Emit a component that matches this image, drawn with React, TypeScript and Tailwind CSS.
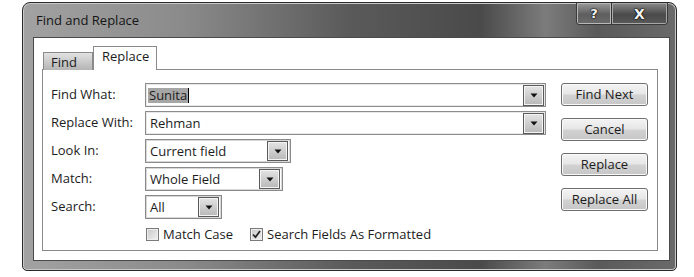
import React from "react";

const font = "font-['Open_Sans',sans-serif]";

function DropBtn({ className = "" }: { className?: string }) {
  return (
    <div
      className={`flex items-center justify-center border border-[#5a5a5a] bg-[linear-gradient(#e4e4e4,#b8b8b8)] shadow-[inset_0_0_0_1px_#f4f4f4] ${className}`}
    >
      <svg width="8" height="5" viewBox="0 0 8 5">
        <path d="M0.5 0.5 L7.5 0.5 L4 4.5 Z" fill="#111" />
      </svg>
    </div>
  );
}

function LongInput({ children }: { children: React.ReactNode }) {
  return (
    <div className="flex h-[24px] flex-1 items-center border border-[#8c8c8c] bg-white pl-[2px] pr-px shadow-[inset_0_0_0_1px_#e8e8e8]">
      <div className="flex flex-1 items-center">{children}</div>
      <DropBtn className="h-[21px] w-[21px]" />
    </div>
  );
}

function Combo({ w, text }: { w: string; text: string }) {
  return (
    <div
      className={`flex h-[24px] items-center border border-[#8a8a8a] bg-white pl-[4px] pr-[2px] shadow-[inset_0_0_0_1px_#d8d8d8] ${w}`}
    >
      <span className="flex-1 leading-none">{text}</span>
      <DropBtn className="h-[20px] w-[21px]" />
    </div>
  );
}

function Row({ label, children }: { label: string; children: React.ReactNode }) {
  return (
    <div className="flex h-[24px] items-center">
      <div className="w-[94px] shrink-0">{label}</div>
      {children}
    </div>
  );
}

function Btn({ children }: { children: React.ReactNode }) {
  return (
    <div className="flex h-[23px] w-[87px] items-center justify-center rounded-[3px] border border-[#6e6e6e] bg-[linear-gradient(#f4f4f4_0%,#e6e6e6_48%,#d2d2d2_52%,#c6c6c6_100%)] shadow-[inset_0_0_0_1px_#fafafa]">
      {children}
    </div>
  );
}

function CheckBox({ checked }: { checked?: boolean }) {
  return (
    <div className="flex h-[13px] w-[13px] items-center justify-center border border-[#7a7a7a] bg-[linear-gradient(135deg,#c8c8c8,#f2f2f2)] shadow-[inset_0_0_0_1px_#eeeeee]">
      {checked && (
        <svg width="9" height="9" viewBox="0 0 9 9">
          <path d="M1 4.5 L3.5 7.2 L8 1" stroke="#222" strokeWidth="1.8" fill="none" />
        </svg>
      )}
    </div>
  );
}

export default function App() {
  return (
    <div className={`h-[277px] w-[694px] overflow-hidden bg-white text-[13px] text-[#1c1c1c] ${font}`}>
      <div className="ml-[22px] mt-[2px] flex h-[269px] w-[655px] flex-col rounded-t-[8px] rounded-b-[5px] border border-[#2a2a2a] bg-[linear-gradient(90deg,#a2a2a2_0%,#8a8a8a_25%,#5a5a5a_50%,#4a4a4a_70%,#7c7c7c_80%,#5a5a5a_88%,#6a6a6a_100%)] shadow-[inset_0_0_0_1px_#c8c8c8]">
        {/* title bar */}
        <div className="flex h-[34px] shrink-0 items-start justify-between">
          <div className="pl-[13px] pt-[8px] text-[13px] leading-[18px] text-[#151515]">Find and Replace</div>
          <div className="mr-[8px] flex h-[22px] overflow-hidden rounded-b-[4px] border border-t-0 border-[#3a3a3a]">
            <div className="flex w-[35px] items-center justify-center border-r border-[#333] bg-[linear-gradient(#9a9a9a,#5e5e5e_55%,#6c6c6c)] shadow-[inset_0_0_0_1px_#b8b8b8]">
              <span className="font-['DejaVu_Sans',sans-serif] text-[13px] font-bold leading-none text-[#f4f4f4] [text-shadow:0_0_1px_#000,0_0_1px_#000,0_0_2px_#000]">
                ?
              </span>
            </div>
            <div className="flex w-[55px] items-center justify-center bg-[linear-gradient(#8a8a8a,#4a4a4a_55%,#5a5a5a)] shadow-[inset_0_0_0_1px_#a8a8a8]">
              <span className="font-['DejaVu_Sans',sans-serif] text-[14px] font-bold leading-none text-[#f4f4f4] [text-shadow:0_0_1px_#000,0_0_1px_#000,0_0_2px_#000]">
                X
              </span>
            </div>
          </div>
        </div>

        {/* client area */}
        <div className="mb-[9px] ml-[10px] mr-[6px] flex flex-1 flex-col border border-[#4a4a4a] bg-white pb-[9px] pl-[8px] pr-[11px] pt-[8px]">
          {/* tabs */}
          <div className="relative z-10 -mb-px flex h-[24px] items-end pl-px">
            <div className="flex h-[18px] w-[50px] items-center border border-b-0 border-[#8a8a8a] bg-[linear-gradient(#e2e2e2,#b4b4b4)] pl-[7px] pt-[2px] leading-none">
              Find
            </div>
            <div className="flex h-[24px] w-[64px] items-start border border-b-0 border-[#8a8a8a] bg-white pl-[8px] pt-[3px] leading-none">
              Replace
            </div>
          </div>
          {/* panel */}
          <div className="flex flex-1 border border-[#8a8a8a] pl-[8px] pr-[9px] pt-[13px]">
            <div className="flex flex-1 flex-col gap-[4px] pr-[15px]">
              <Row label="Find What:">
                <LongInput>
                  <span className="bg-[#a6a6a6] px-px leading-[15px]">Sunita</span>
                  <span className="h-[15px] w-px bg-black" />
                </LongInput>
              </Row>
              <Row label="Replace With:">
                <LongInput>
                  <span className="pl-[2px] leading-none">Rehman</span>
                </LongInput>
              </Row>
              <Row label="Look In:">
                <Combo w="w-[146px]" text="Current field" />
              </Row>
              <Row label="Match:">
                <Combo w="w-[138px]" text="Whole Field" />
              </Row>
              <Row label="Search:">
                <Combo w="w-[77px]" text="All" />
              </Row>
              <div className="mt-[3px] flex h-[16px] items-center pl-[95px]">
                <CheckBox />
                <span className="ml-[4px] leading-none">Match Case</span>
                <div className="ml-[17px]">
                  <CheckBox checked />
                </div>
                <span className="ml-[4px] leading-none">Search Fields As Formatted</span>
              </div>
            </div>
            <div className="flex w-[87px] flex-col gap-[12px]">
              <Btn>Find Next</Btn>
              <Btn>Cancel</Btn>
              <Btn>Replace</Btn>
              <Btn>Replace All</Btn>
            </div>
          </div>
        </div>
      </div>
    </div>
  );
}
